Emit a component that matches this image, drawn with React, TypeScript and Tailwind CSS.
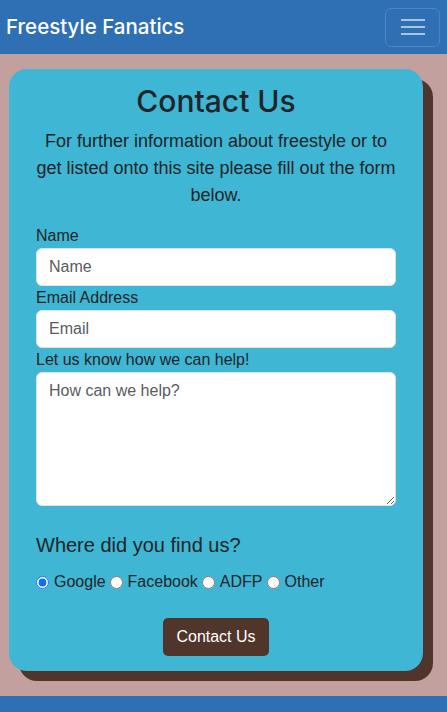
export default function App() {
  return (
    <div className="min-h-[712px] bg-[#c1a09d] font-['Liberation_Sans',Arial,sans-serif] text-[#212529]">
      {/* Navbar */}
      <nav className="flex h-[54px] items-center justify-between bg-[#2f6fb4] pl-[6px] pr-[7px]">
        <span className="font-['Inter',sans-serif] text-[20.5px] font-medium text-white">Freestyle Fanatics</span>
        <button className="flex h-[39px] w-[55px] flex-col items-center justify-center gap-[5px] rounded-[6px] border border-white/15">
          <span className="block h-[2px] w-[24px] bg-white/60" />
          <span className="block h-[2px] w-[24px] bg-white/60" />
          <span className="block h-[2px] w-[24px] bg-white/60" />
        </button>
      </nav>

      {/* Contact card */}
      <main className="px-[9px] pb-[25px] pt-[15px]">
        <div className="w-[414px] rounded-[18px] bg-[#3fb6d3] px-[27px] pb-[15px] pt-[14px] shadow-[10px_10px_0_#50352a]">
          <h1 className="text-center font-['Inter',sans-serif] text-[30px] font-medium leading-[36px] text-[#212529]">
            Contact Us
          </h1>
          <p className="mt-[9px] text-center text-[18px] leading-[27px]">
            For further information about freestyle or to get listed onto this site please fill out the form below.
          </p>

          <form className="mt-[15px]">
            <label className="block text-[16px] leading-[24px]">Name</label>
            <input
              placeholder="Name"
              className="block h-[38px] w-full rounded-[6px] border border-[#dee2e6] bg-white px-[12px] text-[16px] placeholder:text-[#595c5f]"
            />
            <label className="block text-[16px] leading-[24px]">Email Address</label>
            <input
              placeholder="Email"
              className="block h-[38px] w-full rounded-[6px] border border-[#dee2e6] bg-white px-[12px] text-[16px] placeholder:text-[#595c5f]"
            />
            <label className="block text-[16px] leading-[24px]">Let us know how we can help!</label>
            <textarea
              placeholder="How can we help?"
              className="block h-[134px] w-full resize-y rounded-[6px] border border-[#dee2e6] bg-white px-[12px] py-[6px] text-[16px] placeholder:text-[#595c5f]"
            />

            <h2 className="mt-[27px] text-[20px] leading-[24px]">Where did you find us?</h2>
            <div className="mt-[13px] flex items-center text-[16px] leading-[24px]">
              {["Google", "Facebook", "ADFP", "Other"].map((opt, i) => (
                <label key={opt} className="mr-[4px] flex items-center gap-[5px]">
                  <input
                    type="radio"
                    name="source"
                    defaultChecked={i === 0}
                    className="m-0 h-[13px] w-[13px] accent-[#0d6efd]"
                  />
                  {opt}
                </label>
              ))}
            </div>

            <div className="mt-[24px] flex justify-center">
              <button
                type="button"
                className="h-[38px] rounded-[5px] bg-[#50352a] px-[13px] text-[16px] text-white"
              >
                Contact Us
              </button>
            </div>
          </form>
        </div>
      </main>

      <footer className="h-[40px] bg-[#2f6fb4]" />
    </div>
  )
}
